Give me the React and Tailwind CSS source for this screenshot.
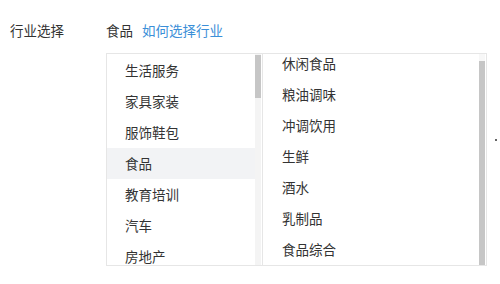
import React from "react";

const leftItems = ["生活服务", "家具家装", "服饰鞋包", "食品", "教育培训", "汽车", "房地产"];
const rightItems = ["休闲食品", "粮油调味", "冲调饮用", "生鲜", "酒水", "乳制品", "食品综合"];

const font = { fontFamily: '"Noto Sans CJK SC", "Noto Sans", sans-serif' };

export default function App() {
  return (
    <div className="w-[500px] h-[284px] bg-white text-[#333] overflow-hidden" style={font}>
      <div className="flex items-center pt-[20px] text-[13.5px] leading-[20px]">
        <span className="w-[106px] pl-[10px]">行业选择</span>
        <span className="mr-[9px]">食品</span>
        <span className="text-[#3b8fd8]">如何选择行业</span>
      </div>

      <div className="flex mt-[13px]">
        <div className="ml-[106px] w-[381px] h-[213px] border border-[#e6e6e6] flex overflow-hidden">
          {/* first level */}
          <div className="w-[156px] flex border-r border-[#e6e6e6]">
            <div className="flex-1 pt-[1px] overflow-hidden">
              {leftItems.map((item) => (
                <div
                  key={item}
                  className={`h-[31px] pl-[18px] flex items-center text-[13.5px] ${
                    item === "食品" ? "bg-[#f2f3f5]" : ""
                  }`}
                >
                  {item}
                </div>
              ))}
            </div>
            <div className="w-[6px] mr-[1px] bg-[#f4f4f4]">
              <div className="mt-[1px] h-[43px] bg-[#c6c6c6]" />
            </div>
          </div>

          {/* second level */}
          <div className="flex-1 flex">
            <div className="flex-1 overflow-hidden">
              <div className="-mt-[6px]">
                {rightItems.map((item) => (
                  <div key={item} className="h-[31px] pl-[19px] flex items-center text-[13.5px]">
                    {item}
                  </div>
                ))}
              </div>
            </div>
            <div className="w-[6px] mr-[1px] bg-[#f7f7f7]">
              <div className="mt-[7px] h-[206px] bg-[#c6c6c6]" />
            </div>
          </div>
        </div>
        <span className="ml-[8px] mt-[86px] w-[2px] h-[2px] rounded-full bg-[#333] self-start" />
      </div>
    </div>
  );
}
